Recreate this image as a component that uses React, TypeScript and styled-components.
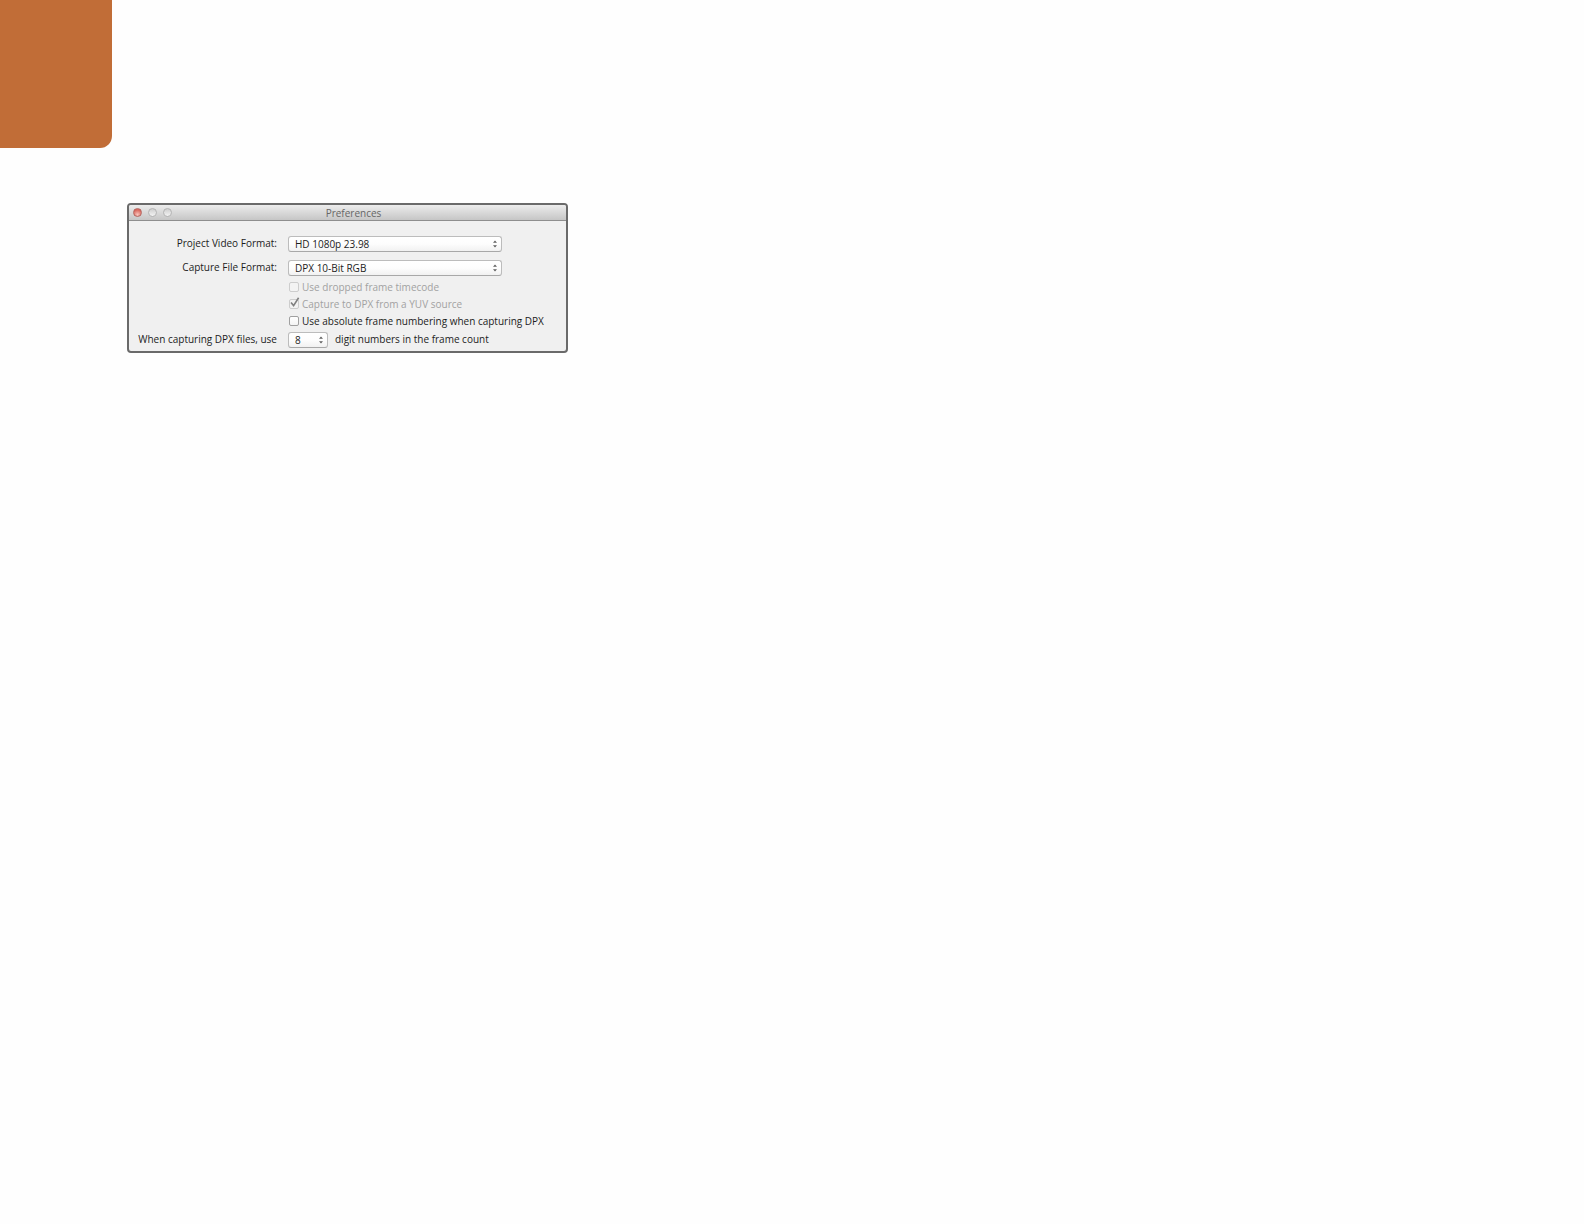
import React from "react";
import styled, { createGlobalStyle } from "styled-components";

const GlobalStyle = createGlobalStyle`
  *, *::before, *::after {
    box-sizing: border-box;
  }

  body {
    margin: 0;
    background: #fefefe;
    color: #1c1c1c;
    font-family: "Open Sans", "Noto Sans", sans-serif;
    font-size: 10px;
    line-height: 16px;
  }
`;

const Page = styled.div`
  display: flex;
  flex-direction: column;
  gap: 55px;
`;

const SectionTab = styled.div`
  width: 112px;
  height: 148px;
  background: #c16d37;
  border-bottom-right-radius: 12px;
`;

const Content = styled.main`
  padding: 0 16px 0 127px;
`;

const Window = styled.section`
  max-width: 441px;
  border: 2px solid #6a6a6a;
  border-radius: 4px;
  background: #f0f0f0;
  overflow: hidden;
`;

const TitleBar = styled.header`
  display: grid;
  grid-template-columns: 1fr auto 1fr;
  align-items: center;
  height: 16px;
  padding: 0 4px;
  background: linear-gradient(#ececec, #c6c6c6);
  border-bottom: 1px solid #8e8e8e;
`;

const Title = styled.h1`
  margin: 0;
  padding-left: 12px;
  color: #666;
  font-size: 10px;
  font-weight: 400;
  line-height: 14px;
`;

const WindowButtons = styled.div`
  display: flex;
  gap: 6px;
`;

const WindowButton = styled.button<{ $close?: boolean }>`
  width: 9px;
  height: 9px;
  padding: 0;
  border: 1px solid ${(p) => (p.$close ? "#b5655f" : "#b4b4b4")};
  border-radius: 50%;
  background: ${(p) =>
    p.$close
      ? "radial-gradient(circle at 50% 80%, #f8c4bc, #d9695f 70%)"
      : "linear-gradient(#cfcfcf, #f3f3f3)"};
`;

const Form = styled.form`
  display: flex;
  flex-direction: column;
  padding: 15px 0 3px;
`;

const Row = styled.div<{ $after?: number }>`
  display: grid;
  grid-template-columns: 148px 1fr;
  column-gap: 11px;
  margin-bottom: ${(p) => p.$after ?? 0}px;
  line-height: 15px;
`;

const RowLabel = styled.label`
  text-align: right;
  white-space: nowrap;
`;

const Field = styled.div`
  display: flex;
  gap: 7px;
`;

const SelectBox = styled.div<{ $width: number }>`
  position: relative;
  width: ${(p) => p.$width}px;
  height: 16px;
`;

const Select = styled.select`
  display: block;
  width: 100%;
  height: 16px;
  padding: 0 14px 0 6px;
  appearance: none;
  border: 1px solid #bcbcbc;
  border-bottom-color: #a8a8a8;
  border-radius: 3px;
  background: linear-gradient(#fff, #fdfdfd 50%, #f1f1f1);
  color: #1c1c1c;
  font: inherit;
  line-height: 14px;
`;

const Arrows = styled.svg`
  position: absolute;
  top: 4px;
  right: 4px;
  pointer-events: none;
`;

const Checks = styled.div`
  display: flex;
  flex-direction: column;
  gap: 1px;
  margin: 3px 0 3px 160px;
`;

const CheckLabel = styled.label<{ $disabled?: boolean }>`
  display: flex;
  align-items: center;
  gap: 3px;
  height: 16px;
  color: ${(p) => (p.$disabled ? "#a2a2a2" : "#1c1c1c")};
  white-space: nowrap;
`;

const CheckMark = styled.span`
  position: relative;
  display: flex;
`;

const Checkbox = styled.input`
  width: 10px;
  height: 10px;
  margin: 0;
  appearance: none;
  border: 1px solid #a0a0a0;
  border-radius: 2px;
  background: linear-gradient(#fff, #f4f4f4);

  &:disabled {
    border-color: #cdcdcd;
    background: #f3f3f3;
  }
`;

const Tick = styled.svg`
  position: absolute;
  top: -2px;
  left: 0;
  pointer-events: none;
`;

function PopUp({ id, width, value }: { id: string; width: number; value: string }) {
  return (
    <SelectBox $width={width}>
      <Select id={id} defaultValue={value}>
        <option value={value}>{value}</option>
      </Select>
      <Arrows width="6" height="8" viewBox="0 0 6 8" aria-hidden="true">
        <path d="M3 0.4 5 2.8H1zM3 7.6 5 5.2H1z" fill="#606060" />
      </Arrows>
    </SelectBox>
  );
}

const options = [
  { label: "Use dropped frame timecode", disabled: true, checked: false },
  { label: "Capture to DPX from a YUV source", disabled: true, checked: true },
  { label: "Use absolute frame numbering when capturing DPX", disabled: false, checked: false },
];

export default function App() {
  return (
    <>
      <GlobalStyle />
      <Page>
        <SectionTab />
        <Content>
          <Window aria-labelledby="window-title">
            <TitleBar>
              <WindowButtons>
                <WindowButton type="button" $close aria-label="Close" />
                <WindowButton type="button" aria-label="Minimize" />
                <WindowButton type="button" aria-label="Zoom" />
              </WindowButtons>
              <Title id="window-title">Preferences</Title>
            </TitleBar>
            <Form>
              <Row $after={8}>
                <RowLabel htmlFor="video-format">Project Video Format:</RowLabel>
                <PopUp id="video-format" width={214} value="HD 1080p 23.98" />
              </Row>
              <Row>
                <RowLabel htmlFor="file-format">Capture File Format:</RowLabel>
                <PopUp id="file-format" width={214} value="DPX 10-Bit RGB" />
              </Row>
              <Checks>
                {options.map((o) => (
                  <CheckLabel key={o.label} $disabled={o.disabled}>
                    <CheckMark>
                      <Checkbox type="checkbox" defaultChecked={o.checked} disabled={o.disabled} />
                      {o.checked && (
                        <Tick width="12" height="11" viewBox="0 0 12 11" aria-hidden="true">
                          <path d="M2 5.4 4.6 8.6 9.6 0.8" fill="none" stroke="#808080" strokeWidth="1.6" />
                        </Tick>
                      )}
                    </CheckMark>
                    {o.label}
                  </CheckLabel>
                ))}
              </Checks>
              <Row>
                <RowLabel htmlFor="digits">When capturing DPX files, use</RowLabel>
                <Field>
                  <PopUp id="digits" width={40} value="8" />
                  <span>digit numbers in the frame count</span>
                </Field>
              </Row>
            </Form>
          </Window>
        </Content>
      </Page>
    </>
  );
}
